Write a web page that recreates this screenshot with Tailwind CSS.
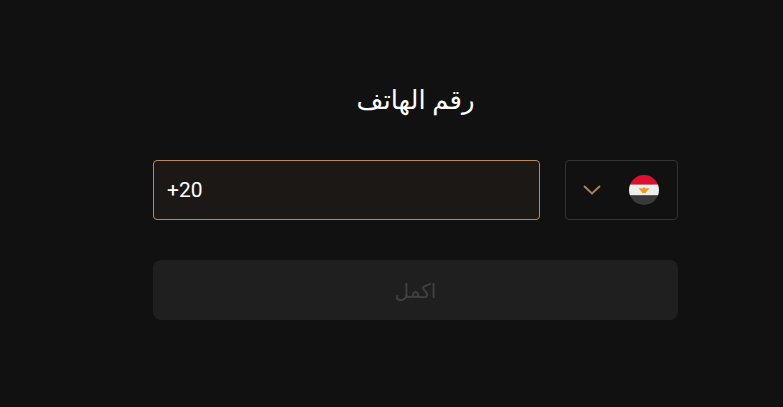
<!DOCTYPE html>
<html lang="ar" dir="rtl">
  <head>
    <meta charset="UTF-8" />
    <title>رقم الهاتف</title>
    <script src="https://cdn.jsdelivr.net/npm/@tailwindcss/browser@4"></script>
  </head>
  <body class="h-screen overflow-hidden bg-[#111111] font-['Roboto','DejaVu_Sans',sans-serif]">
    <div class="mr-[105px] w-[525px] pt-[83px]">
      <h1 class="h-[34px] text-center text-[26px] leading-[34px] font-normal text-white">رقم الهاتف</h1>

      <div class="mt-[43px] flex gap-[25px]">
        <button class="flex h-[60px] w-[113px] items-center justify-between rounded-[4px] border border-[#333333] bg-[#111111] pr-[18px] pl-[76px]">
          <svg class="shrink-0" width="30" height="30" viewBox="0 0 30 30">
            <clipPath id="flag"><circle cx="15" cy="15" r="15" /></clipPath>
            <g clip-path="url(#flag)">
              <rect width="30" height="9.500" fill="#e20e2f" />
              <rect y="9.500" width="30" height="11" fill="#eeeeee" />
              <rect y="20.500" width="30" height="9.500" fill="#3a3a3a" />
              <path d="M9.500 13 L13.500 13.500 L15 12 L16.500 13.500 L20.500 13 L18 16 L16.500 18 L13.500 18 L12 16 Z" fill="#f09a1f" />
            </g>
          </svg>
          <svg class="mr-[28px] shrink-0" width="18" height="10" viewBox="0 0 18 10" fill="none">
            <path d="M1 1 L9 8.500 L17 1" stroke="#b5834f" stroke-width="1.800" />
          </svg>
        </button>
        <div class="flex h-[60px] flex-1 items-center rounded-[4px] border border-[#b98a5e] bg-[#1c1815] px-[13px] pt-[2px]" dir="ltr">
          <span class="text-[21px] text-white">+20</span>
        </div>
      </div>

      <button class="mt-10 h-[60px] w-full rounded-lg bg-[#1f1f1f] pt-px text-xl text-[#404040]">اكمل</button>
    </div>
  </body>
</html>
